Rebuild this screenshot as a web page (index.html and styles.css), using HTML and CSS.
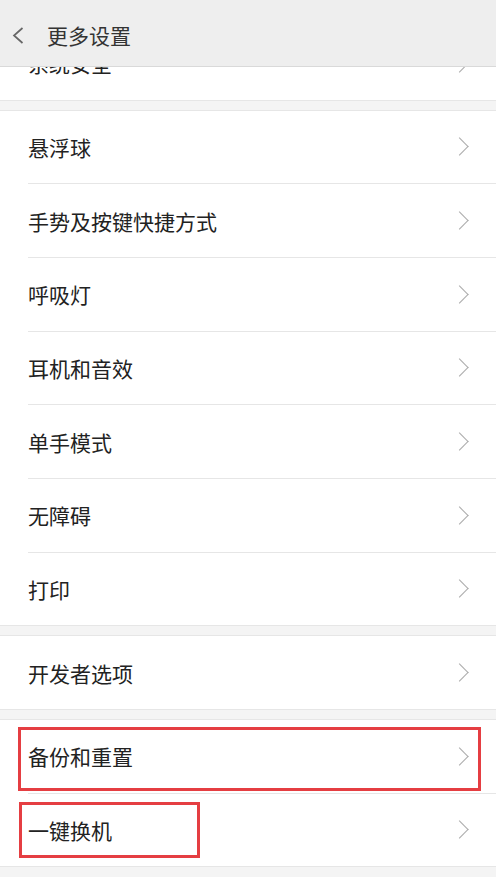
FILE: index.html
```html
<!DOCTYPE html>
<html>

<head>
  <meta charset="utf-8">
  <title>更多设置</title>
  <link rel="stylesheet" href="styles.css">
</head>

<body>

  <!-- Top bar stays over the scrolled list -->
  <header class="top-bar">
    <svg class="back" width="12" height="17" viewBox="0 0 12 17">
      <polyline points="10.5,1 2,8.5 10.5,16" fill="none" stroke="#666" stroke-width="1.7" />
    </svg>
    <h1>更多设置</h1>
  </header>

  <main class="settings">
    <section class="group">
      <div class="row"><span>系统安全</span><i class="chev"></i></div>
    </section>

    <section class="group">
      <div class="row"><span>悬浮球</span><i class="chev"></i></div>
      <div class="row"><span>手势及按键快捷方式</span><i class="chev"></i></div>
      <div class="row"><span>呼吸灯</span><i class="chev"></i></div>
      <div class="row"><span>耳机和音效</span><i class="chev"></i></div>
      <div class="row"><span>单手模式</span><i class="chev"></i></div>
      <div class="row"><span>无障碍</span><i class="chev"></i></div>
      <div class="row"><span>打印</span><i class="chev"></i></div>
    </section>

    <section class="group">
      <div class="row"><span>开发者选项</span><i class="chev"></i></div>
    </section>

    <section class="group">
      <div class="row">
        <span>备份和重置</span><i class="chev"></i>
        <div class="mark mark-wide"></div>
      </div>
      <div class="row">
        <span>一键换机</span><i class="chev"></i>
        <div class="mark mark-short"></div>
      </div>
    </section>
  </main>

</body>

</html>
```

FILE: styles.css
```css
body {
  margin: 0;
  padding: 0;
  font-family: "Noto Sans CJK SC", "Noto Sans", sans-serif;
  background-color: #f4f4f4;
  color: #222;
}

.top-bar {
  position: fixed;
  top: 0;
  left: 0;
  right: 0;
  height: 67px;
  box-sizing: border-box;
  padding-top: 5px;
  display: flex;
  align-items: center;
  background-color: #eeeeee;
  border-bottom: 1px solid #d9d9d9;
  z-index: 2;
}

.top-bar .back {
  margin-left: 12px;
}

.top-bar h1 {
  margin: 0 0 0 23px;
  font-size: 21px;
  font-weight: normal;
  color: #333;
  line-height: 1;
}

.settings {
  padding-top: 27px;
}

.group {
  background-color: #fff;
  border-top: 1px solid #e6e6e6;
  border-bottom: 1px solid #e6e6e6;
  margin-bottom: 9px;
}

.group:first-child {
  border-top: none;
}

.row {
  position: relative;
  height: 72.67px;
  margin-left: 28px;
  padding-right: 28px;
  display: flex;
  align-items: center;
  justify-content: space-between;
  border-bottom: 1px solid #e6e6e6;
  font-size: 21px;
}

.row:last-child {
  border-bottom: none;
}

/* Right chevron drawn with borders */
.chev {
  width: 12px;
  height: 12px;
  border-top: 1.5px solid #aaa;
  border-right: 1.5px solid #aaa;
  transform: rotate(45deg);
  margin-right: 2px;
}

/* Red highlight boxes */
.mark {
  position: absolute;
  border: 3px solid #e53e42;
  box-sizing: border-box;
}

.mark-wide {
  top: 7px;
  left: -10px;
  right: 15px;
  height: 64px;
}

.mark-short {
  top: 8px;
  left: -9px;
  width: 181px;
  height: 56px;
}
```
